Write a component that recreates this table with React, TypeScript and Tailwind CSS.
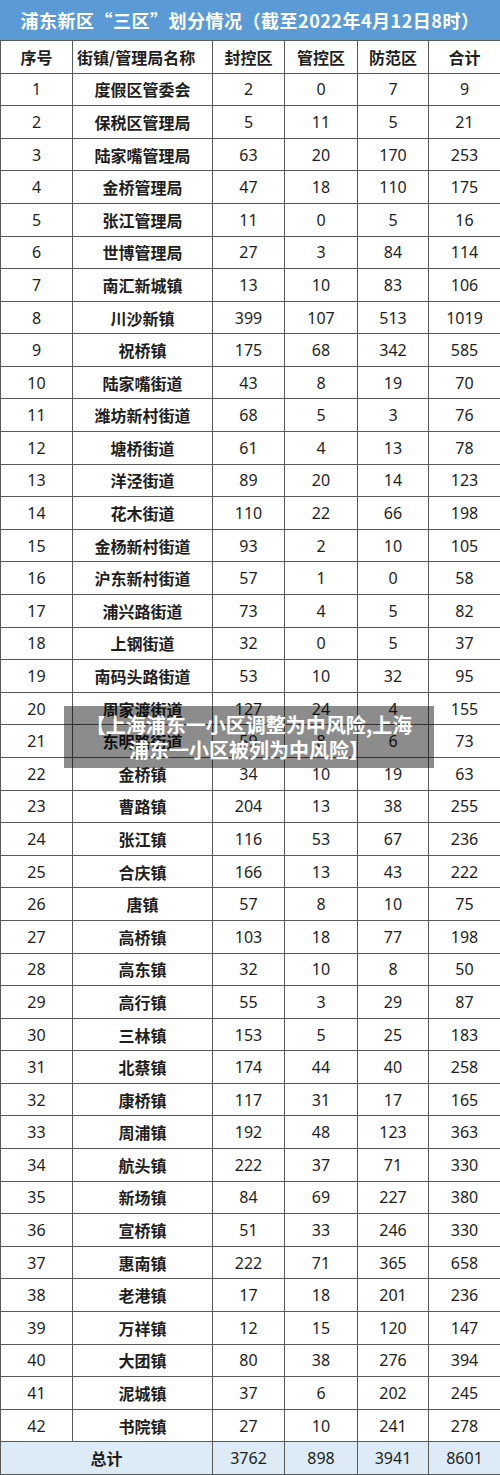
const rows: [number, string, number, number, number, number][] = [
  [1, '度假区管委会', 2, 0, 7, 9],
  [2, '保税区管理局', 5, 11, 5, 21],
  [3, '陆家嘴管理局', 63, 20, 170, 253],
  [4, '金桥管理局', 47, 18, 110, 175],
  [5, '张江管理局', 11, 0, 5, 16],
  [6, '世博管理局', 27, 3, 84, 114],
  [7, '南汇新城镇', 13, 10, 83, 106],
  [8, '川沙新镇', 399, 107, 513, 1019],
  [9, '祝桥镇', 175, 68, 342, 585],
  [10, '陆家嘴街道', 43, 8, 19, 70],
  [11, '潍坊新村街道', 68, 5, 3, 76],
  [12, '塘桥街道', 61, 4, 13, 78],
  [13, '洋泾街道', 89, 20, 14, 123],
  [14, '花木街道', 110, 22, 66, 198],
  [15, '金杨新村街道', 93, 2, 10, 105],
  [16, '沪东新村街道', 57, 1, 0, 58],
  [17, '浦兴路街道', 73, 4, 5, 82],
  [18, '上钢街道', 32, 0, 5, 37],
  [19, '南码头路街道', 53, 10, 32, 95],
  [20, '周家渡街道', 127, 24, 4, 155],
  [21, '东明路街道', 59, 8, 6, 73],
  [22, '金桥镇', 34, 10, 19, 63],
  [23, '曹路镇', 204, 13, 38, 255],
  [24, '张江镇', 116, 53, 67, 236],
  [25, '合庆镇', 166, 13, 43, 222],
  [26, '唐镇', 57, 8, 10, 75],
  [27, '高桥镇', 103, 18, 77, 198],
  [28, '高东镇', 32, 10, 8, 50],
  [29, '高行镇', 55, 3, 29, 87],
  [30, '三林镇', 153, 5, 25, 183],
  [31, '北蔡镇', 174, 44, 40, 258],
  [32, '康桥镇', 117, 31, 17, 165],
  [33, '周浦镇', 192, 48, 123, 363],
  [34, '航头镇', 222, 37, 71, 330],
  [35, '新场镇', 84, 69, 227, 380],
  [36, '宣桥镇', 51, 33, 246, 330],
  [37, '惠南镇', 222, 71, 365, 658],
  [38, '老港镇', 17, 18, 201, 236],
  [39, '万祥镇', 12, 15, 120, 147],
  [40, '大团镇', 80, 38, 276, 394],
  [41, '泥城镇', 37, 6, 202, 245],
  [42, '书院镇', 27, 10, 241, 278],
];

const cjk = { fontFamily: '"Noto Sans CJK SC", sans-serif' };
const cell = 'flex items-center justify-center border-r border-b border-[#5a5a5a]';

export default function App() {
  return (
    <div
      className="relative w-[500px] h-[1475px] bg-white text-[#1e1e1e]"
      style={{ fontFamily: '"Noto Sans", "Noto Sans CJK SC", sans-serif' }}
    >
      {/* 标题 */}
      <div
        className="h-[41px] flex items-center justify-center bg-[#5b9bd5] border-b border-[#5a5a5a] text-white font-bold text-[18px] tracking-[0.5px]"
        style={cjk}
      >
        浦东新区“三区”划分情况（截至2022年4月12日8时）
      </div>

      <div className="grid grid-cols-[72px_140px_72px_73px_71px_72px] grid-rows-[repeat(44,minmax(0,1fr))] h-[1434px] border-l border-[#5a5a5a] text-[16px]">
        {/* 表头 */}
        <div className={`${cell} font-bold`} style={cjk}>序号</div>
        <div className={`${cell} !justify-start pl-[4px] font-bold`} style={cjk}>街镇/管理局名称</div>
        <div className={`${cell} font-bold`} style={cjk}>封控区</div>
        <div className={`${cell} font-bold`} style={cjk}>管控区</div>
        <div className={`${cell} font-bold`} style={cjk}>防范区</div>
        <div className={`${cell} font-bold`} style={cjk}>合计</div>

        {rows.map(([no, name, a, b, c, d]) => (
          <div key={no} className="contents">
            <div className={cell}>{no}</div>
            <div className={`${cell} font-bold`} style={cjk}>{name}</div>
            <div className={cell}>{a}</div>
            <div className={cell}>{b}</div>
            <div className={cell}>{c}</div>
            <div className={cell}>{d}</div>
          </div>
        ))}

        {/* 总计 */}
        <div className={`${cell} col-span-2 bg-[#ddebf7] font-bold`} style={cjk}>总计</div>
        <div className={`${cell} bg-[#ddebf7]`}>3762</div>
        <div className={`${cell} bg-[#ddebf7]`}>898</div>
        <div className={`${cell} bg-[#ddebf7]`}>3941</div>
        <div className={`${cell} bg-[#ddebf7]`}>8601</div>
      </div>

      {/* 覆盖标题 */}
      <div
        className="absolute left-[64px] top-[706px] w-[370px] h-[62px] bg-black/45 flex items-center justify-center text-center text-white font-bold text-[20px] leading-[25px]"
        style={cjk}
      >
        【上海浦东一小区调整为中风险,上海
        <br />
        浦东一小区被列为中风险】
      </div>
    </div>
  );
}
